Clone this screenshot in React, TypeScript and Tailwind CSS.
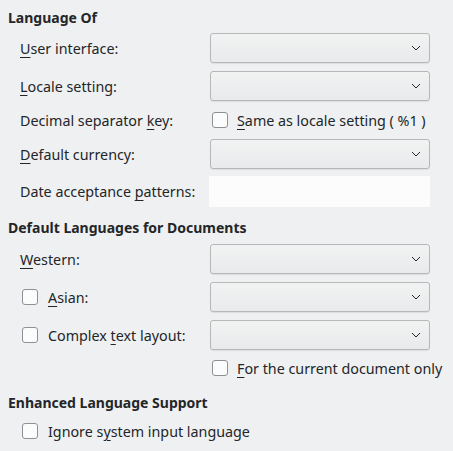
import React from "react";

// Small mnemonic underline like a Qt/KDE accelerator
function M({ children }: { children: React.ReactNode }) {
  return <span className="underline decoration-1 underline-offset-[3px]">{children}</span>;
}

function Combo() {
  return (
    <div className="w-[220px] h-[30px] rounded-[3px] border border-[#b5b7b9] bg-gradient-to-b from-[#f1f2f2] to-[#e9eaeb] shadow-[0_1px_1px_rgba(0,0,0,0.08)] flex items-center justify-end pr-[8px]">
      <svg width="10" height="6" viewBox="0 0 10 6" className="text-[#232629]">
        <path d="M1 1l4 4 4-4" fill="none" stroke="currentColor" strokeWidth="1" />
      </svg>
    </div>
  );
}

function Check() {
  return <div className="w-[16px] h-[16px] rounded-[3px] border border-[#8e9194] bg-[#fcfcfc] shrink-0" />;
}

function Row({ label, children, className = "" }: { label: React.ReactNode; children: React.ReactNode; className?: string }) {
  return (
    <div className={`flex items-center ${className}`}>
      <div className="w-[210px] pl-[20px] shrink-0">{label}</div>
      {children}
    </div>
  );
}

export default function App() {
  return (
    <div
      className="w-[453px] h-[451px] bg-[#eff0f1] text-[#232629] text-[14.3px] leading-[19px] overflow-hidden"
      style={{ fontFamily: '"Noto Sans", sans-serif' }}
    >
      <div className="pl-[8px] pt-[8px] font-bold text-[14px]">Language Of</div>

      <Row label={<><M>U</M>ser interface:</>} className="h-[30px] mt-[6px]">
        <Combo />
      </Row>
      <Row label={<><M>L</M>ocale setting:</>} className="h-[30px] mt-[8px]">
        <Combo />
      </Row>
      <Row label={<>Decimal separator <M>k</M>ey:</>} className="h-[22px] mt-[8px]">
        <div className="flex items-center pl-[2px] gap-[9px]">
          <Check />
          <span><M>S</M>ame as locale setting ( %1 )</span>
        </div>
      </Row>
      <Row label={<><M>D</M>efault currency:</>} className="h-[30px] mt-[8px]">
        <Combo />
      </Row>
      <Row label={<>Date acceptance <M>p</M>atterns:</>} className="h-[31px] mt-[7px]">
        <div className="w-[221px] h-[31px] -ml-[1px] bg-[#fcfcfc]" />
      </Row>

      <div className="pl-[8px] mt-[11px] font-bold text-[14px]">Default Languages for Documents</div>

      <Row label={<><M>W</M>estern:</>} className="h-[30px] mt-[7px]">
        <Combo />
      </Row>
      <div className="flex items-center h-[30px] mt-[8px]">
        <div className="w-[210px] pl-[22px] shrink-0 flex items-center gap-[10px]">
          <Check />
          <span><M>A</M>sian:</span>
        </div>
        <Combo />
      </div>
      <div className="flex items-center h-[30px] mt-[8px]">
        <div className="w-[210px] pl-[22px] shrink-0 flex items-center gap-[10px]">
          <Check />
          <span>Complex <M>t</M>ext layout:</span>
        </div>
        <Combo />
      </div>
      <div className="flex items-center h-[22px] mt-[7px] pl-[212px] gap-[9px]">
        <Check />
        <span><M>F</M>or the current document only</span>
      </div>

      <div className="pl-[8px] mt-[14px] font-bold text-[14px]">Enhanced Language Support</div>
      <div className="flex items-center h-[22px] mt-[8px] pl-[22px] gap-[10px]">
        <Check />
        <span>Ignore s<M>y</M>stem input language</span>
      </div>
    </div>
  );
}
